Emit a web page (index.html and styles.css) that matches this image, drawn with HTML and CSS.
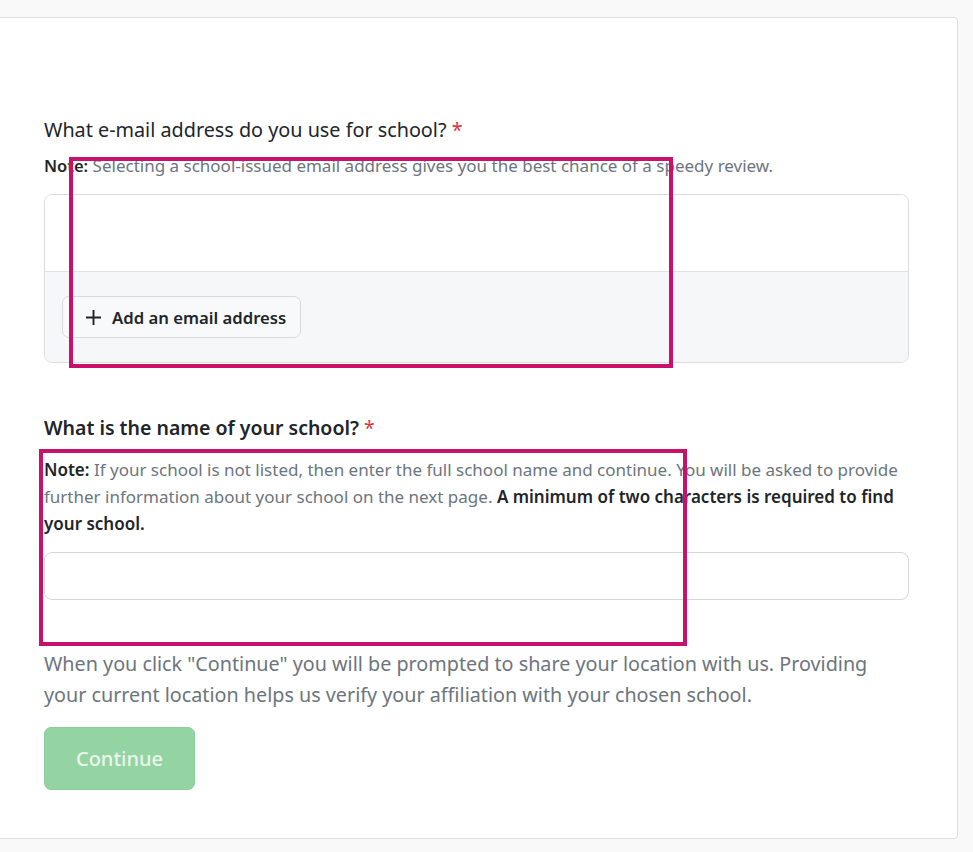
FILE: index.html
```html
<!DOCTYPE html>
<html lang="en">
<head>
<meta charset="utf-8">
<title>School verification</title>
<link rel="stylesheet" href="styles.css">
</head>
<body>
<div class="page">
  <div class="card">
    <section class="field field-email">
      <h2 class="q q-light">What e-mail address do you use for school? <span class="req">*</span></h2>
      <p class="note note-single"><b>Note:</b> Selecting a school-issued email address gives you the best chance of a speedy review.</p>
      <div class="email-box">
        <div class="email-list"></div>
        <div class="email-foot">
          <button class="add-btn" type="button">
            <svg class="plus" width="17" height="17" viewBox="0 0 17 17" aria-hidden="true"><path d="M8.5 1v15M1 8.5h15" stroke="#222" stroke-width="1.9" fill="none"/></svg>
            <span>Add an email address</span>
          </button>
        </div>
      </div>
      <div class="mark mark-1"></div>
    </section>

    <section class="field field-school">
      <h2 class="q q-bold">What is the name of your school? <span class="req">*</span></h2>
      <p class="note note-multi"><b>Note:</b> If your school is not listed, then enter the full school name and continue. You will be asked to provide further information about your school on the next page. <b>A minimum of two characters is required to find your school.</b></p>
      <input class="school-input" type="text" aria-label="School name">
      <div class="mark mark-2"></div>
    </section>

    <p class="location">When you click "Continue" you will be prompted to share your location with us. Providing your current location helps us verify your affiliation with your chosen school.</p>
    <button class="continue" type="button" disabled>Continue</button>
  </div>
</div>
</body>
</html>
```

FILE: styles.css
```css
* { box-sizing: border-box; }

html, body {
  margin: 0;
  padding: 0;
  background: #f9f9f9;
}

body {
  font-family: "Noto Sans", "Open Sans", sans-serif;
  color: #212529;
  overflow: hidden;
  height: 852px;
}

.page {
  padding-top: 17px;
}

.card {
  position: relative;
  margin-left: -6px;
  width: 964px;
  background: #fff;
  border: 1px solid #dcdcdc;
  border-radius: 4px;
  padding: 97px 48px 48px 49px;
}

.field {
  position: relative;
}

.q {
  margin: 0;
  line-height: 30px;
  color: #212529;
}

.q-light { font-weight: 400; font-size: 19.8px; }
.q-bold { font-weight: 600; font-size: 19.5px; }

.req { color: #dc3545; font-weight: 400; }

.note {
  margin: 9px 0 0;
  line-height: 24px;
  color: #6c757d;
}

.note b {
  color: #212529;
  font-weight: 600;
}

.note-single {
  font-size: 17px;
}

.note-single b {
  font-size: 16.5px;
}

.note-multi {
  margin-top: 13px;
  font-size: 17px;
  line-height: 27px;
}

.email-box {
  margin-top: 16px;
  border: 1px solid #dcdcdc;
  border-radius: 8px;
  overflow: hidden;
}

.email-list {
  height: 77px;
  background: #fff;
  border-bottom: 1px solid #e2e2e2;
}

.email-foot {
  background: #f6f7f8;
  padding: 24px 18px 24px 17px;
  height: 90px;
}

.add-btn {
  display: inline-flex;
  align-items: center;
  gap: 10px;
  height: 42px;
  padding: 0 14px 0 22px;
  background: #f8f9fa;
  border: 1px solid #dadada;
  border-radius: 7px;
  font-family: inherit;
  font-size: 16.7px;
  font-weight: 600;
  color: #212529;
}

.plus { display: block; }

.field-school {
  margin-top: 50px;
}

.school-input {
  display: block;
  width: 100%;
  height: 48px;
  margin-top: 15px;
  border: 1px solid #d6d6d6;
  border-radius: 8px;
  background: #fff;
  font-family: inherit;
  font-size: 16px;
}

.location {
  margin: 48px 0 0;
  font-size: 19.75px;
  line-height: 31px;
  color: #6c757d;
}

.continue {
  display: block;
  margin-top: 17px;
  width: 151px;
  height: 63px;
  background: #94d3a2;
  border: 1px solid #8ccc9b;
  border-radius: 7px;
  font-family: inherit;
  font-size: 20px;
  font-weight: 500;
  color: #eaf6ec;
}

/* annotation overlays */
.mark {
  position: absolute;
  border: 4px solid #c8116b;
  pointer-events: none;
}

.mark-1 {
  left: 25px;
  top: 42px;
  width: 604px;
  height: 211px;
}

.mark-2 {
  left: -5px;
  top: 36px;
  width: 648px;
  height: 197px;
}
```
